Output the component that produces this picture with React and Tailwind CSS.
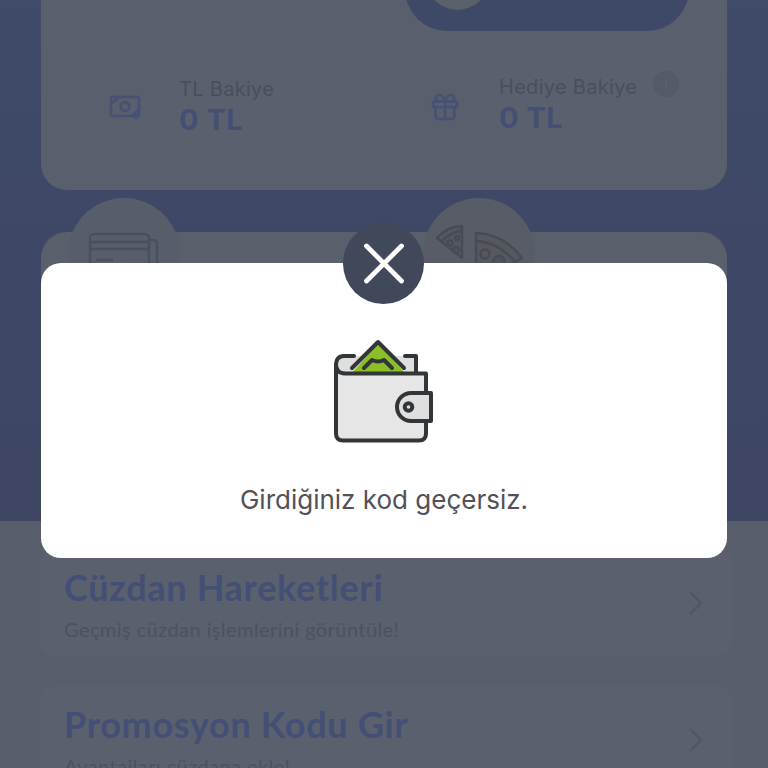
import { Gift } from "lucide-react";

const BanknoteIcon = () => (
  <svg width="32" height="26" viewBox="0 0 32 26" fill="none" stroke="#465174" strokeWidth="2.6">
    <rect x="2" y="3" width="28" height="19" rx="1.5" />
    <circle cx="16" cy="12.5" r="4.4" />
    <path d="M3 9l6-5M23 22l6-6M27 20v5" />
  </svg>
);

const CardsIcon = () => (
  <svg width="72" height="64" viewBox="0 0 72 64" fill="none" stroke="#494f5e" strokeWidth="2.4">
    <path d="M61 8h4q4 0 4 4v44H16v-5" />
    <rect x="2" y="2" width="59" height="46" rx="4" />
    <path d="M2 10h59M2 17h59M8 28h17" />
    <path d="M43 29h9" stroke="#5c5b62" />
  </svg>
);

const PizzaIcon = () => (
  <svg width="88" height="64" viewBox="0 0 88 64" fill="none" stroke="#484b55" strokeWidth="2.4" strokeLinejoin="round">
    <path d="M2 14Q13 2 27 2v32Z" fill="#54575f" />
    <path d="M6 18Q15 8 27 7" />
    <circle cx="15" cy="19" r="2.5" />
    <circle cx="22" cy="14" r="2" />
    <circle cx="21" cy="26" r="3" />
    <path d="M41 9Q69 10 87 34L41 60Z" fill="#55585f" />
    <path d="M41 17Q64 18 80 38" />
    <circle cx="50" cy="30" r="4.5" />
    <circle cx="64" cy="38" r="6" fill="#50515a" />
  </svg>
);

const WalletIcon = () => (
  <svg className="-ml-[2px]" width="104" height="104" viewBox="0 0 104 104" fill="none" stroke="#333638" strokeWidth="4" strokeLinecap="round" strokeLinejoin="round">
    <path d="M24 17H12a8 8 0 0 0 0 17h72V17H70" fill="#dfdfdf" stroke="none" />
    <path d="M21 34L47 4l27 30Z" fill="#8abf25" stroke="none" />
    <path d="M21 29L47 3l26 26" />
    <path d="M33 29l8-8c4 2 8 2 12 0l8 8" />
    <path d="M23 17H12q-7 1-7 8.500" />
    <path d="M74 17h11v16" />
    <path d="M5 25.500q0 8.500 9 9h81v60q0 7-7 7H12q-7 0-7-7Z" fill="#e6e6e6" />
    <path d="M100 54H80a14 14 0 0 0 0 28h20Z" fill="#dfdfdf" />
    <circle cx="77.500" cy="68" r="3.800" />
  </svg>
);

const Balance = ({ icon, title, amount, info }) => (
  <div className="relative flex h-[93px] w-[294px] items-center rounded-[20px] bg-[#5b606e] pl-3.5">
    <div className="flex h-[68px] w-[68px] shrink-0 items-center justify-center rounded-full bg-[#5a5f6d]">
      {icon}
    </div>
    <div className={info ? "ml-5 -mt-1.5" : "ml-5 -mt-0.5"}>
      <p className="text-[20px] leading-[27px] tracking-[0.3px] whitespace-nowrap text-[#494f5d]">{title}</p>
      <p className="text-[29px] leading-[33px] font-bold tracking-[0.5px] text-[#444f73]">{amount}</p>
    </div>
    {info && (
      <span className="absolute top-[11px] right-3 flex h-[26px] w-[26px] items-center justify-center rounded-full bg-[#545a68] text-sm font-bold text-[#5a606e]">
        i
      </span>
    )}
  </div>
);

const MenuRow = ({ title, text }) => (
  <div className="flex h-[107px] shrink-0 items-center justify-between rounded-[14px] bg-[#5a606e] pr-[28px] pl-6 font-[Lato,sans-serif]">
    <div className="whitespace-nowrap">
      <h2 className="text-[36px] leading-[44px] font-bold tracking-[0.68px] text-[#444f75]">{title}</h2>
      <p className="mt-2 text-[20px] leading-[24px] tracking-[0.42px] text-[#4c5260]">{text}</p>
    </div>
    <svg width="16" height="26" viewBox="0 0 16 26" fill="none" stroke="#515765" strokeWidth="2.5">
      <path d="M2 2l11 11L2 24" />
    </svg>
  </div>
);

export default function App() {
  return (
    <div className="relative h-[768px] w-[768px] overflow-hidden bg-[#585e6b] font-[Inter,sans-serif]">
      {/* Wallet header */}
      <div className="h-[521px] bg-linear-to-b from-[#3e4b69] via-[#3e4866] to-[#3d4563] px-[41px]">
        <div className="h-[190px] rounded-b-[26px] bg-[#595f6c] px-9">
          <div className="flex h-[31px] items-end justify-end pr-0.5">
            <div className="flex h-[84px] w-[284px] shrink-0 items-start rounded-full bg-[#3e4867] pl-[21px]">
              <div className="h-[63px] w-[63px] rounded-full bg-[#596068]" />
            </div>
          </div>
          <div className="mt-[29px] flex gap-[26px]">
            <Balance title="TL Bakiye" amount="0 TL" icon={<BanknoteIcon />} />
            <Balance
              title="Hediye Bakiye"
              amount="0 TL"
              icon={<Gift className="h-8 w-8 text-[#465174]" strokeWidth={2} />}
              info
            />
          </div>
        </div>

        {/* Campaigns */}
        <div className="relative mt-[42px] h-[200px] rounded-[26px] bg-[#5a5f6c]">
          <div className="absolute -top-[34px] left-[27px] flex h-[112px] w-[112px] justify-center rounded-full bg-[#575d6b] pt-[34px]">
            <CardsIcon />
          </div>
          <div className="absolute -top-[34px] left-[382px] flex h-[112px] w-[112px] justify-center rounded-full bg-[#585c66] pt-[26px]">
            <PizzaIcon />
          </div>
        </div>
      </div>

      {/* Menu */}
      <div className="flex flex-col gap-[30px] pt-[28px] pr-[36px] pl-[40px]">
        <MenuRow title="Cüzdan Hareketleri" text="Geçmiş cüzdan işlemlerini görüntüle!" />
        <MenuRow title="Promosyon Kodu Gir" text="Avantajları cüzdana ekle!" />
      </div>

      {/* Invalid code dialog */}
      <div className="absolute inset-0 px-[41px] pt-[263px]">
        <div className="relative flex h-[295px] flex-col items-center rounded-[20px] bg-white pt-[76px]">
          <button className="absolute -top-10 left-[302px] flex h-[81px] w-[81px] items-center justify-center rounded-full bg-[#414859]">
            <svg width="42" height="42" viewBox="0 0 42 42" stroke="white" strokeWidth="4.800" strokeLinecap="round">
              <path d="M3.500 3l35 35M38.500 3l-35 35" />
            </svg>
          </button>
          <WalletIcon />
          <p className="mt-[39px] text-[26px] leading-9 whitespace-nowrap text-[#515157]">Girdiğiniz kod geçersiz.</p>
        </div>
      </div>
    </div>
  );
}
